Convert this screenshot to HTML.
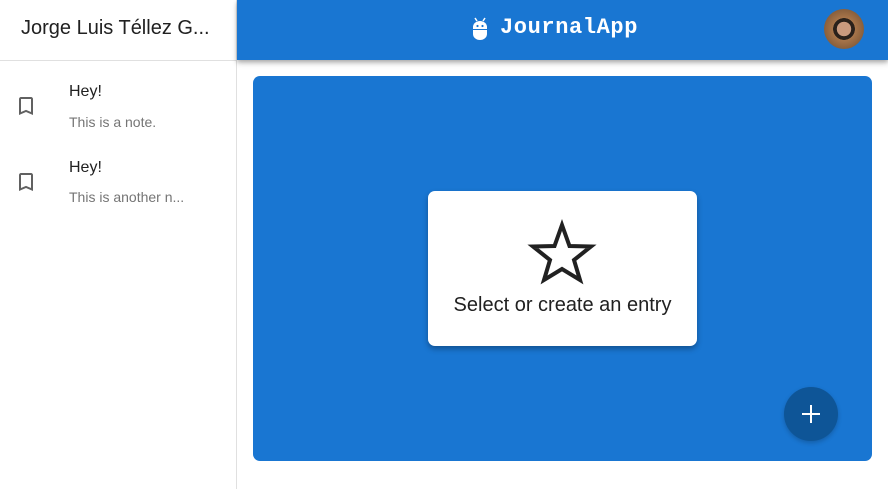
<!DOCTYPE html>
<html><head><meta charset="utf-8"><style>
*{margin:0;padding:0;box-sizing:border-box}
body{width:888px;height:489px;overflow:hidden;background:#fff;font-family:"Liberation Sans",sans-serif;position:relative}
.side{position:absolute;left:0;top:0;width:237px;height:489px;border-right:1px solid #e0e0e0}
.side .hd{height:61px;border-bottom:1px solid #e0e0e0;font-size:20px;color:#212121;padding:17px 0 0 21px;white-space:nowrap}
.item{position:absolute;left:0;width:236px}
.item svg{position:absolute;left:14px}
.item .t{position:absolute;left:69px;font-size:16px;color:#212121}
.item .s{position:absolute;left:69px;font-size:14px;color:#757575}
.bar{position:absolute;left:237px;top:0;width:651px;height:60px;background:#1976d2;box-shadow:0 2px 4px rgba(0,0,0,.25),0 4px 6px rgba(0,0,0,.12)}
.brand{position:absolute;top:15px;color:#fff;font-family:"Liberation Mono",monospace;font-weight:bold;font-size:22px;letter-spacing:0.6px}
.av{position:absolute;left:587px;top:9px;width:40px;height:40px;border-radius:50%;background:radial-gradient(ellipse at 50% 50%,#c99a7e 0 25%,#2a211b 26% 38%,#a8754a 39%,#6b4a2e 100%)}
.main{position:absolute;left:253px;top:76px;width:619px;height:385px;background:#1976d2;border-radius:7px}
.card{position:absolute;left:175px;top:115px;width:269px;height:155px;background:#fff;border-radius:7px;box-shadow:0 3px 6px rgba(0,0,0,.3)}
.card svg{position:absolute;left:0;top:0}
.card .m{position:absolute;left:0;width:100%;top:103px;text-align:center;font-size:20px;color:#212121}
.fab{position:absolute;left:531px;top:311px;width:54px;height:54px;border-radius:50%;background:#0e5597;box-shadow:0 2px 5px rgba(0,0,0,.2)}
.fab:before{content:"";position:absolute;left:18px;top:26px;width:18px;height:2.4px;background:#fff}
.fab:after{content:"";position:absolute;left:25.8px;top:18px;width:2.4px;height:18px;background:#fff}
</style></head><body>
<div class="side">
<div class="hd">Jorge Luis Téllez G...</div>
</div>
<div class="item" style="top:83px">
<svg style="top:11px" width="24" height="24" viewBox="0 0 24 24"><path fill="#616161" d="M17 3H7c-1.1 0-1.99.9-1.99 2L5 21l7-3 7 3V5c0-1.1-.9-2-2-2zm0 15l-5-2.18L7 18V5h10v13z"/></svg>
<div class="t" style="top:0">Hey!</div><div class="s" style="top:31px">This is a note.</div>
</div>
<div class="item" style="top:159px">
<svg style="top:11px" width="24" height="24" viewBox="0 0 24 24"><path fill="#616161" d="M17 3H7c-1.1 0-1.99.9-1.99 2L5 21l7-3 7 3V5c0-1.1-.9-2-2-2zm0 15l-5-2.18L7 18V5h10v13z"/></svg>
<div class="t" style="top:0">Hey!</div><div class="s" style="top:30px">This is another n...</div>
</div>
<div class="bar">
<svg style="position:absolute;left:234px;top:17px" width="18" height="24" viewBox="0 0 18 24"><path d="M4 1l2 3M14 1l-2 3" stroke="#fff" stroke-width="1.5"/><path fill="#fff" d="M2 10a7 6 0 0 1 14 0v7a7 6 0 0 1-14 0z"/><circle cx="6.5" cy="9" r="1.1" fill="#1976d2"/><circle cx="11.5" cy="9" r="1.1" fill="#1976d2"/><rect x="2" y="12" width="14" height="1" fill="#1976d2"/></svg>
<div class="brand" style="left:263px">JournalApp</div>
<div class="av"></div>
</div>
<div class="main">
<div class="card">
<svg width="269" height="110" viewBox="0 0 269 110"><polygon points="134,34 141.5,55 163,55.5 146,69 152,89 134,78 116,89 122,69 105,55.5 126.5,55" fill="none" stroke="#212121" stroke-width="4" stroke-linejoin="miter"/></svg>
<div class="m">Select or create an entry</div>
</div>
<div class="fab"></div>
</div>
</body></html>
